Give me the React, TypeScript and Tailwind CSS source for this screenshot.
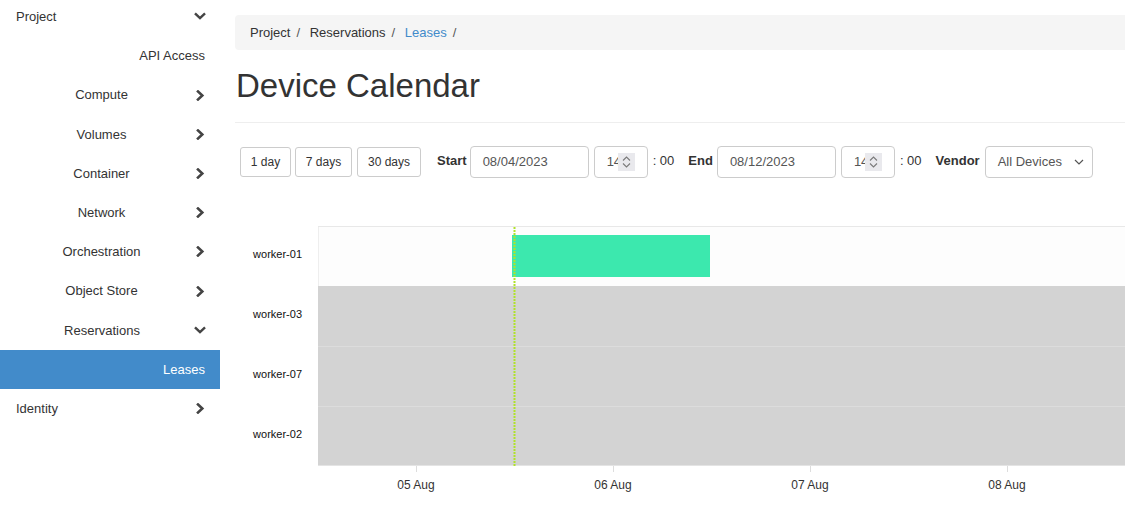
import React from "react";

type Item = {
  label: string;
  align: "left" | "center" | "right";
  chevron?: "right" | "down";
  active?: boolean;
};

const items: Item[] = [
  { label: "Project", align: "left", chevron: "down" },
  { label: "API Access", align: "right" },
  { label: "Compute", align: "center", chevron: "right" },
  { label: "Volumes", align: "center", chevron: "right" },
  { label: "Container", align: "center", chevron: "right" },
  { label: "Network", align: "center", chevron: "right" },
  { label: "Orchestration", align: "center", chevron: "right" },
  { label: "Object Store", align: "center", chevron: "right" },
  { label: "Reservations", align: "center", chevron: "down" },
  { label: "Leases", align: "right", active: true },
  { label: "Identity", align: "left", chevron: "right" },
];

function ChevRight() {
  return (
    <svg width="9" height="11" viewBox="0 0 9 11" fill="none" stroke="#444" strokeWidth="2.6" strokeLinecap="square">
      <polyline points="2,1.5 6.3,5.5 2,9.5" />
    </svg>
  );
}

function ChevDown() {
  return (
    <svg width="13" height="9" viewBox="0 0 13 9" fill="none" stroke="#444" strokeWidth="2.6" strokeLinecap="square">
      <polyline points="2,2 6.5,6.3 11,2" />
    </svg>
  );
}

function SideRow({ item }: { item: Item }) {
  const base = "flex items-center h-[39.2px] pr-[15px] text-[13px]";
  const cls = item.active ? base + " bg-[#428bca] text-white" : base + " text-[#333]";
  let labelCls = "flex-1";
  if (item.align === "left") labelCls += " pl-[16px] text-left";
  if (item.align === "center") labelCls += " pl-[10px] text-center";
  if (item.align === "right") labelCls += " text-right";
  return (
    <div className={cls}>
      <div className={labelCls}>{item.label}</div>
      {item.chevron === "right" && (
        <div className="w-[12px] flex justify-end">
          <ChevRight />
        </div>
      )}
      {item.chevron === "down" && (
        <div className="w-[12px] flex justify-end mr-[-1px]">
          <ChevDown />
        </div>
      )}
    </div>
  );
}

function DateBox({ value }: { value: string }) {
  return (
    <div className="w-[119px] h-[32px] border border-[#ccc] rounded-[4px] flex items-center pl-[12px] text-[13px] text-[#555]">
      {value}
    </div>
  );
}

function Spinner() {
  return (
    <div className="w-[17px] h-[18px] bg-[#e9e9ed] flex items-center justify-center">
      <svg width="11" height="14" viewBox="0 0 11 14" fill="none" stroke="#7a7a7a" strokeWidth="1.1">
        <polyline points="2,5.5 5.5,2 9,5.5" />
        <polyline points="2,8.5 5.5,12 9,8.5" />
      </svg>
    </div>
  );
}

function TimeBox() {
  return (
    <div className="w-[54px] h-[32px] border border-[#ccc] rounded-[4px] flex items-center pl-[12px] text-[13px] text-[#555]">
      <div className="w-[11px] overflow-hidden whitespace-nowrap">14</div>
      <Spinner />
    </div>
  );
}

function Btn({ label, w, ml }: { label: string; w: string; ml: string }) {
  return (
    <div
      className={
        "h-[30px] border border-[#ccc] rounded-[3px] flex items-center justify-center text-[12px] text-[#333] bg-white " +
        w +
        " " +
        ml
      }
    >
      {label}
    </div>
  );
}

const rows = ["worker-01", "worker-03", "worker-07", "worker-02"];
const ticks = [
  { x: 98, label: "05 Aug" },
  { x: 295, label: "06 Aug" },
  { x: 492, label: "07 Aug" },
  { x: 689, label: "08 Aug" },
];

export default function App() {
  return (
    <div className="flex w-[1125px] h-[518px] overflow-hidden bg-white font-['Liberation_Sans',Arial,sans-serif] text-[#333]">
      <aside className="w-[220px] shrink-0 flex flex-col mt-[-2.8px]">
        {items.map((it) => (
          <SideRow key={it.label} item={it} />
        ))}
      </aside>
      <main className="flex-1 min-w-0 pl-[15px]">
        <div className="mt-[15px] h-[35px] rounded-l-[4px] bg-[#f5f5f5] flex items-center pl-[15px] text-[13px]">
          <span>Project</span>
          <span className="px-[6px] text-[#555]">/&nbsp;</span>
          <span>Reservations</span>
          <span className="px-[6px] text-[#555]">/&nbsp;</span>
          <span className="text-[#428bca]">Leases</span>
          <span className="px-[6px] text-[#555]">/&nbsp;</span>
        </div>
        <h1 className="mt-[16px] text-[33px] leading-[40px] pl-px">Device Calendar</h1>
        <div className="mt-[16px] border-t border-[#eee]" />
        <div className="mt-[23px] pl-[5px] flex items-center h-[32px] text-[13px]">
          <Btn label="1 day" w="w-[51px]" ml="" />
          <Btn label="7 days" w="w-[57px]" ml="ml-[4px]" />
          <Btn label="30 days" w="w-[64px]" ml="ml-[5px]" />
          <span className="ml-[16px] font-bold mb-[2px]">Start</span>
          <div className="ml-[3px]">
            <DateBox value="08/04/2023" />
          </div>
          <div className="ml-[5px]">
            <TimeBox />
          </div>
          <span className="ml-[5px] mb-[2px]">: 00</span>
          <span className="ml-[14px] font-bold mb-[2px]">End</span>
          <div className="ml-[4px]">
            <DateBox value="08/12/2023" />
          </div>
          <div className="ml-[5px]">
            <TimeBox />
          </div>
          <span className="ml-[5px] mb-[2px]">: 00</span>
          <span className="ml-[14px] font-bold mb-[2px]">Vendor</span>
          <div className="ml-[5px] w-[108px] h-[32px] border border-[#ccc] rounded-[4px] flex items-center pl-[12px] pr-[8px] text-[13px] text-[#555]">
            <span className="flex-1">All Devices</span>
            <svg width="10" height="6" viewBox="0 0 10 6" fill="none" stroke="#555" strokeWidth="1.2">
              <polyline points="1,1 5,5 9,1" />
            </svg>
          </div>
        </div>

        <div className="mt-[48px] flex">
          <div className="w-[83px] shrink-0 flex flex-col">
            {rows.map((r) => (
              <div key={r} className="h-[60px] flex items-center justify-end pr-[16px] pb-[4px] text-[11px] text-[#111]">
                {r}
              </div>
            ))}
          </div>
          <div className="flex-1 relative flex flex-col border-t border-[#e8e8e8]">
            <div className="h-[59px] bg-[#fdfdfd] border-l border-[#eee]" />
            <div className="h-[60px] bg-[#d3d3d3]" />
            <div className="h-[60px] bg-[#d3d3d3] border-t border-[#dcdcdc]" />
            <div className="h-[60px] bg-[#d3d3d3] border-t border-[#dcdcdc] border-b border-b-[#e4e4e4]" />
            <div className="absolute left-[194px] top-[8px] w-[198px] h-[42px] bg-[#3ce8ae]" />
            <svg className="absolute left-[195px] top-0" width="3" height="240">
              <line x1="1.5" y1="0" x2="1.5" y2="240" stroke="#b0e22a" strokeWidth="2" strokeDasharray="2 1" />
            </svg>
          </div>
        </div>
        <div className="relative h-[40px] ml-[83px]">
          {ticks.map((t) => (
            <React.Fragment key={t.label}>
              <div className="absolute top-0 w-px h-[6px] bg-[#ddd]" style={{ left: t.x }} />
              <div
                className="absolute top-[12px] -translate-x-1/2 text-[12px] leading-[14px] text-[#333] whitespace-nowrap"
                style={{ left: t.x }}
              >
                {t.label}
              </div>
            </React.Fragment>
          ))}
        </div>
      </main>
    </div>
  );
}
